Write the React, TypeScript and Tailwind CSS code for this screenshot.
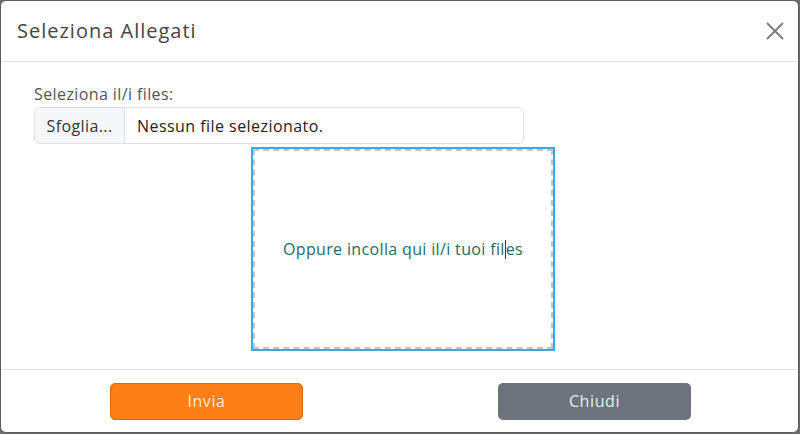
export default function App() {
    return (
        <div className="w-[800px] h-[434px] bg-[#6b6b6b] overflow-hidden" style={{ fontFamily: '"Open Sans", "DejaVu Sans", sans-serif' }}>
            <div className="w-[799px] h-[433px] bg-white border border-[#5c5c5c] rounded-[6px] flex flex-col">
                {/* header */}
                <div className="h-[61px] flex items-center justify-between pl-[16px] pr-[14px] border-b border-[#e2e2e2]">
                    <h2 className="text-[20px] text-[#454545] tracking-[1px]">Seleziona Allegati</h2>
                    <svg width="18" height="18" viewBox="0 0 18 18" className="text-[#7a7a7a]">
                        <path d="M1.5 1.5 L16.5 16.5 M16.5 1.5 L1.5 16.5" stroke="currentColor" strokeWidth="1.8" strokeLinecap="round" />
                    </svg>
                </div>

                {/* body */}
                <div className="flex-1 flex flex-col pt-[21px] pl-[33px]">
                    <label className="text-[16px] text-[#555] leading-[22px] tracking-[0.4px]">Seleziona il/i files:</label>
                    <div className="mt-[2px] w-[490px] h-[37px] flex rounded-[6px] border border-[#dedede] overflow-hidden text-[16px] tracking-[0.4px] text-[#333]">
                        <div className="w-[90px] flex items-center justify-center bg-[#f6f7f8] border-r border-[#dedede]">Sfoglia...</div>
                        <div className="flex items-center pl-[12px] text-[#222] tracking-[0.45px]">Nessun file selezionato.</div>
                    </div>
                    <div className="mt-[3px] ml-[217px] w-[304px] h-[204px] border-2 border-[#3aa9e5]">
                        <div className="w-full h-full border-2 border-dashed border-[#c4c4c4] flex items-center justify-center">
                            <span className="text-[16px] text-[#1e6b68] tracking-[0.35px]">
                                Oppure incolla qui il/i tuoi fil
                                <span className="inline-block w-px h-[19px] bg-[#0f4f4c] align-[-4px]" />
                                es
                            </span>
                        </div>
                    </div>
                </div>

                {/* footer */}
                <div className="h-[63px] border-t border-[#e2e2e2] flex items-center justify-between pl-[109px] pr-[107px]">
                    <button className="w-[193px] h-[37px] rounded-[5px] bg-[#fd7f16] border border-[#d8690c] text-[#fde8d4] text-[16px] tracking-[0.6px]">Invia</button>
                    <button className="w-[193px] h-[37px] rounded-[5px] bg-[#6c737c] text-[#eceef0] text-[16px] tracking-[0.6px]">Chiudi</button>
                </div>
            </div>
        </div>
    )
}
